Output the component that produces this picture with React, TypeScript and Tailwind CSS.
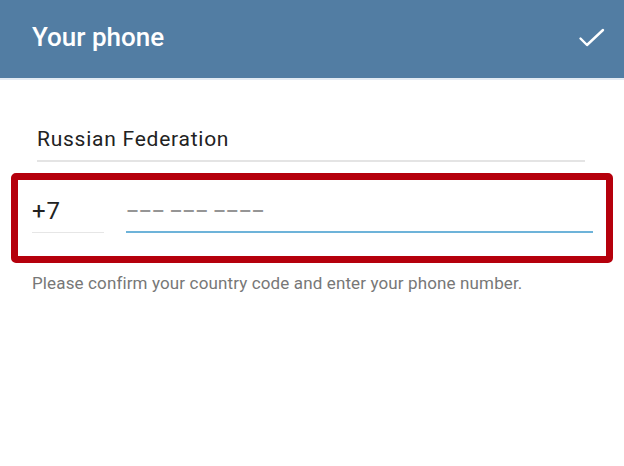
export default function App() {
  return (
    <div className="w-[624px] h-[466px] bg-white font-['Roboto',sans-serif] overflow-hidden">
      {/* Action bar */}
      <div className="h-[78px] bg-[#527da3] flex items-start justify-between pl-[32px] pr-[17px]">
        <h1 className="pt-[22px] text-[26px] leading-[30px] font-medium text-white">Your phone</h1>
        <svg className="mt-[26px]" width="30" height="24" viewBox="0 0 30 24" fill="none">
          <path d="M3.5 12.5 10 19 26 4" stroke="#fff" strokeWidth="2.4" strokeLinecap="round" strokeLinejoin="round" />
        </svg>
      </div>
      <div className="h-[2px] bg-[#e3ebf3]" />

      {/* Country */}
      <div className="mt-[47px] ml-[37px] mr-[39px] pb-[9px] border-b-2 border-[#e4e4e4]">
        <div className="text-[21px] leading-[24px] tracking-[0.75px] text-[#222]">Russian Federation</div>
      </div>

      {/* Phone input, highlighted */}
      <div className="mt-[11px] ml-[11px] w-[602px] h-[90px] border-[7px] border-[#b5000c] rounded-[5px] pl-[14px] pr-[13px] pt-[17px]">
        <div className="flex items-end">
          <div className="w-[72px] pb-[6px] border-b border-[#e6e6e6]">
            <span className="text-[24px] leading-[28px] tracking-[1px] text-[#222]">+7</span>
          </div>
          <div className="flex-1 ml-[22px] pb-[6px] border-b-2 border-[#6db3d9]">
            <span className="text-[20px] leading-[24px] font-medium text-[#959595]">––– ––– ––––</span>
          </div>
        </div>
      </div>

      <p className="mt-[10px] ml-[32px] text-[17px] leading-[20px] tracking-[0.13px] text-[#777]">
        Please confirm your country code and enter your phone number.
      </p>
    </div>
  );
}
